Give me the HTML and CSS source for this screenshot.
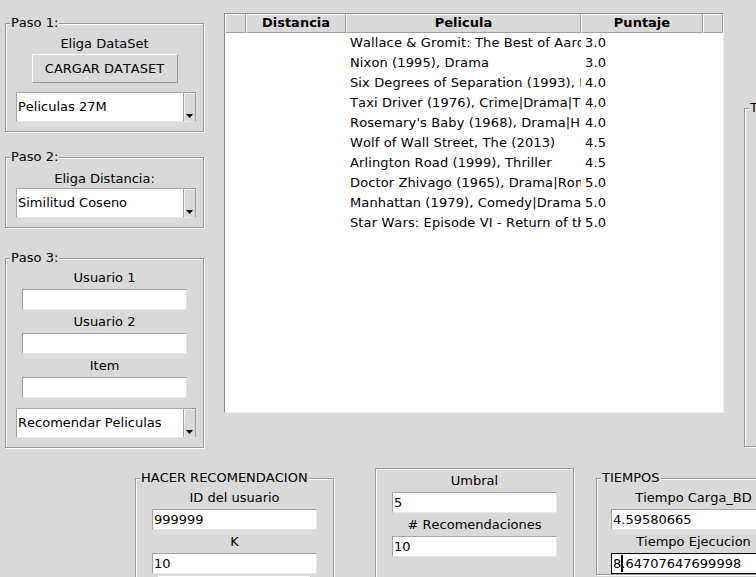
FILE: index.html
```html
<!DOCTYPE html>
<html>
<head>
<meta charset="utf-8">
<title>Recomendador</title>
<link rel="stylesheet" href="styles.css">
</head>
<body>
<div class="app">
  <div class="top">
    <div class="left">
      <div class="frame f1">
        <span class="legend">Paso 1:</span>
        <div class="lbl">Eliga DataSet</div>
        <div class="btn">CARGAR DATASET</div>
        <div class="combo c1"><span class="val">Peliculas 27M</span><span class="arrow"><svg width="7" height="4" viewBox="0 0 7 4"><path d="M0 0H7L3.5 4Z" fill="#000"/></svg></span></div>
      </div>
      <div class="frame f2">
        <span class="legend">Paso 2:</span>
        <div class="lbl">Eliga Distancia:</div>
        <div class="combo c2"><span class="val">Similitud Coseno</span><span class="arrow"><svg width="7" height="4" viewBox="0 0 7 4"><path d="M0 0H7L3.5 4Z" fill="#000"/></svg></span></div>
      </div>
      <div class="frame f3">
        <span class="legend">Paso 3:</span>
        <div class="lbl">Usuario 1</div>
        <div class="entry"></div>
        <div class="lbl gap">Usuario 2</div>
        <div class="entry"></div>
        <div class="lbl gap">Item</div>
        <div class="entry"></div>
        <div class="combo c3"><span class="val">Recomendar Peliculas</span><span class="arrow"><svg width="7" height="4" viewBox="0 0 7 4"><path d="M0 0H7L3.5 4Z" fill="#000"/></svg></span></div>
      </div>
    </div>

    <div class="tree">
      <div class="thead">
        <div class="th"></div>
        <div class="th">Distancia</div>
        <div class="th">Pelicula</div>
        <div class="th">Puntaje</div>
        <div class="th"></div>
      </div>
      <div class="tr"><div class="td"></div><div class="td"></div><div class="td">Wallace &amp; Gromit: The Best of Aardman Animation (1996), Animation</div><div class="td">3.0</div></div>
      <div class="tr"><div class="td"></div><div class="td"></div><div class="td">Nixon (1995), Drama</div><div class="td">3.0</div></div>
      <div class="tr"><div class="td"></div><div class="td"></div><div class="td">Six Degrees of Separation (1993), Drama</div><div class="td">4.0</div></div>
      <div class="tr"><div class="td"></div><div class="td"></div><div class="td">Taxi Driver (1976), Crime|Drama|Thriller</div><div class="td">4.0</div></div>
      <div class="tr"><div class="td"></div><div class="td"></div><div class="td">Rosemary's Baby (1968), Drama|Horror|Thriller</div><div class="td">4.0</div></div>
      <div class="tr"><div class="td"></div><div class="td"></div><div class="td">Wolf of Wall Street, The (2013)</div><div class="td">4.5</div></div>
      <div class="tr"><div class="td"></div><div class="td"></div><div class="td">Arlington Road (1999), Thriller</div><div class="td">4.5</div></div>
      <div class="tr"><div class="td"></div><div class="td"></div><div class="td">Doctor Zhivago (1965), Drama|Romance|War</div><div class="td">5.0</div></div>
      <div class="tr"><div class="td"></div><div class="td"></div><div class="td">Manhattan (1979), Comedy|Drama|Romance</div><div class="td">5.0</div></div>
      <div class="tr"><div class="td"></div><div class="td"></div><div class="td">Star Wars: Episode VI - Return of the Jedi (1983), Action|Adventure|Sci-Fi</div><div class="td">5.0</div></div>
    </div>

    <div class="frame rightf">
      <span class="legend">Tabla</span>
    </div>
  </div>

  <div class="bottom">
    <div class="frame hacer">
      <span class="legend">HACER RECOMENDACION</span>
      <div class="lbl">ID del usuario</div>
      <div class="entry">999999</div>
      <div class="lbl gap">K</div>
      <div class="entry">10</div>
      <div class="btn small">RECOMENDAR</div>
    </div>
    <div class="frame mid">
      <div class="lbl">Umbral</div>
      <div class="entry">5</div>
      <div class="lbl gap"># Recomendaciones</div>
      <div class="entry">10</div>
    </div>
    <div class="frame tiempos">
      <span class="legend">TIEMPOS</span>
      <div class="lbl">Tiempo Carga_BD</div>
      <div class="entry">4.59580665</div>
      <div class="lbl gap">Tiempo Ejecucion</div>
      <div class="entry focus">8<span class="caret"></span>.64707647699998</div>
    </div>
  </div>
</div>
</body>
</html>
```

FILE: styles.css
```css
* { box-sizing: border-box; }
html, body { margin: 0; padding: 0; }
body {
  background: #d9d9d9;
  font-family: "DejaVu Sans", sans-serif;
  font-size: 13px;
  line-height: 15px;
  color: #000;
  font-kerning: none;
}
.app {
  width: 756px;
  height: 577px;
  overflow: hidden;
  display: flex;
  flex-direction: column;
}
.top {
  display: flex;
  align-items: flex-start;
  height: 468px;
  flex-shrink: 0;
}
.left {
  flex-shrink: 0;
  margin-left: 5px;
  width: 199px;
  padding-top: 23px;
  display: flex;
  flex-direction: column;
}

/* groove labelframe */
.frame {
  position: relative;
  flex-shrink: 0;
  border: 1px solid #9a9a9a;
  box-shadow: 1px 1px 0 #fff, inset 1px 1px 0 #fff;
  display: flex;
  flex-direction: column;
  align-items: center;
}
.legend {
  position: absolute;
  top: -9px;
  left: 4px;
  padding: 0 1px;
  background: #d9d9d9;
  line-height: 15px;
  white-space: nowrap;
}
.f1 { padding: 12px 0 9px; }
.f2 { margin-top: 25px; padding: 13px 0 9px; }
.f3 { margin-top: 30px; padding: 11px 0 9px; }

.lbl { line-height: 15px; white-space: nowrap; }
.lbl.gap { margin-top: 4px; }

.btn {
  width: 146px;
  height: 29px;
  margin-top: 3px;
  border: 1px solid;
  border-color: #fff #9a9a9a #9a9a9a #fff;
  line-height: 27px;
  text-align: center;
  white-space: nowrap;
}
.btn.small { width: 153px; margin-top: 2px; }

.combo {
  align-self: flex-start;
  margin-left: 10px;
  width: 180px;
  height: 30px;
  display: flex;
  background: #fff;
  border: 1px solid;
  border-color: #a3a3a3 #a3a3a3 #e6e6e6 #a3a3a3;
}
.c1 { margin-top: 9px; }
.c2 { margin-top: 2px; }
.c3 { margin-top: 10px; }
.combo .val {
  flex: 1;
  padding-left: 1px;
  line-height: 28px;
  white-space: nowrap;
  overflow: hidden;
}
.combo .arrow {
  width: 12px;
  background: #d9d9d9;
  border-left: 1px solid #a3a3a3;
  box-shadow: inset 1px 1px 0 #f2f2f2;
  display: flex;
  align-items: flex-end;
  justify-content: center;
  padding-bottom: 3px;
}
.combo .arrow svg { display: block; }

.entry {
  width: 165px;
  height: 21px;
  margin-top: 4px;
  background: #fff;
  border: 1px solid;
  border-color: #a3a3a3 #e6e6e6 #e6e6e6 #a3a3a3;
  padding-left: 1px;
  line-height: 19px;
  white-space: nowrap;
  overflow: hidden;
}
.entry.focus { border-color: #000; }
.caret {
  display: inline-block;
  width: 2px;
  height: 17px;
  background: #000;
  vertical-align: -4px;
  margin-right: -2px;
}

/* treeview */
.tree {
  flex-shrink: 0;
  margin-left: 20px;
  margin-top: 13px;
  width: 500px;
  height: 400px;
  background: #fff;
  border: 1px solid;
  border-color: #8c8c8c #ececec #ececec #8c8c8c;
  overflow: hidden;
}
.thead, .tr {
  display: grid;
  grid-template-columns: 21px 100px 235px 122px 20px;
}
.th {
  height: 19px;
  background: #d9d9d9;
  border: 1px solid;
  border-color: #fff #9e9e9e #9e9e9e #fff;
  font-weight: bold;
  text-align: center;
  line-height: 16px;
  white-space: nowrap;
  overflow: hidden;
}
.tr { height: 20px; }
.td {
  line-height: 20px;
  padding-left: 4px;
  white-space: nowrap;
  overflow: hidden;
  letter-spacing: 0.12px;
}

.rightf {
  margin-left: 20px;
  margin-top: 108px;
  width: 220px;
  height: 339px;
}

/* bottom row */
.bottom {
  display: flex;
  align-items: flex-start;
  flex-shrink: 0;
}
.hacer {
  margin-left: 135px;
  margin-top: 10px;
  width: 199px;
  padding-top: 11px;
}
.mid {
  margin-left: 41px;
  width: 199px;
  height: 120px;
  padding-top: 4px;
}
.tiempos {
  margin-left: 22px;
  margin-top: 10px;
  width: 195px;
  padding-top: 11px;
}
.hacer .entry:first-of-type, .mid .entry, .tiempos .entry { margin-top: 4px; }
```
